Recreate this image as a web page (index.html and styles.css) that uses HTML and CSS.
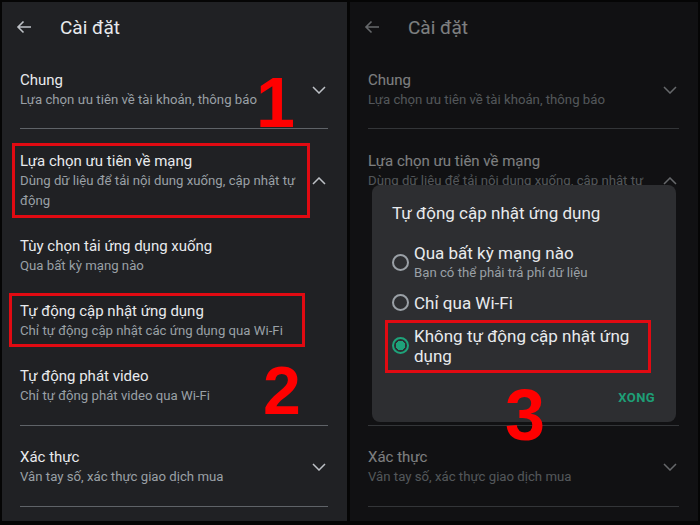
FILE: index.html
```html
<html>
  <head>
    <meta charset="UTF-8">
    <link rel="stylesheet" href="styles.css">
  </head>
  <body>
    <div class="shot">

      <section class="phone left">
        <header class="bar">
          <svg class="back" width="16" height="14" viewBox="0 0 16 14"><path d="M15 7H2M7.5 1.5L2 7l5.5 5.5" fill="none" stroke="#bdc1c6" stroke-width="1.6"/></svg>
          <h1>Cài đặt</h1>
        </header>

        <div class="group first">
          <div class="item">
            <div class="text"><p class="name">Chung</p><p class="desc">Lựa chọn ưu tiên về tài khoản, thông báo</p></div>
            <svg class="chev" width="14" height="8" viewBox="0 0 14 8"><path d="M1 1l6 6 6-6" fill="none" stroke="#bdc1c6" stroke-width="1.5"/></svg>
          </div>
        </div>

        <div class="group second">
          <div class="item">
            <div class="text"><p class="name">Lựa chọn ưu tiên về mạng</p><p class="desc">Dùng dữ liệu để tải nội dung xuống, cập nhật tự động</p></div>
            <svg class="chev" width="14" height="8" viewBox="0 0 14 8"><path d="M1 7l6-6 6 6" fill="none" stroke="#bdc1c6" stroke-width="1.5"/></svg>
          </div>
          <div class="item">
            <div class="text"><p class="name">Tùy chọn tải ứng dụng xuống</p><p class="desc">Qua bất kỳ mạng nào</p></div>
          </div>
          <div class="item">
            <div class="text"><p class="name">Tự động cập nhật ứng dụng</p><p class="desc">Chỉ tự động cập nhật các ứng dụng qua Wi-Fi</p></div>
          </div>
          <div class="item">
            <div class="text"><p class="name">Tự động phát video</p><p class="desc">Chỉ tự động phát video qua Wi-Fi</p></div>
          </div>
        </div>

        <div class="group third">
          <div class="item">
            <div class="text"><p class="name">Xác thực</p><p class="desc">Vân tay số, xác thực giao dịch mua</p></div>
            <svg class="chev" width="14" height="8" viewBox="0 0 14 8"><path d="M1 1l6 6 6-6" fill="none" stroke="#bdc1c6" stroke-width="1.5"/></svg>
          </div>
        </div>

        <div class="mark m1"></div>
        <div class="mark m2"></div>
        <span class="num n1">1</span>
        <span class="num n2">2</span>
      </section>

      <section class="phone right">
        <header class="bar">
          <svg class="back" width="16" height="14" viewBox="0 0 16 14"><path d="M15 7H2M7.5 1.5L2 7l5.5 5.5" fill="none" stroke="#bdc1c6" stroke-width="1.6"/></svg>
          <h1>Cài đặt</h1>
        </header>

        <div class="group first">
          <div class="item">
            <div class="text"><p class="name">Chung</p><p class="desc">Lựa chọn ưu tiên về tài khoản, thông báo</p></div>
            <svg class="chev" width="14" height="8" viewBox="0 0 14 8"><path d="M1 1l6 6 6-6" fill="none" stroke="#bdc1c6" stroke-width="1.5"/></svg>
          </div>
        </div>

        <div class="group second">
          <div class="item">
            <div class="text"><p class="name">Lựa chọn ưu tiên về mạng</p><p class="desc">Dùng dữ liệu để tải nội dung xuống, cập nhật tự <span class="covered">động</span></p></div>
            <svg class="chev" width="14" height="8" viewBox="0 0 14 8"><path d="M1 7l6-6 6 6" fill="none" stroke="#bdc1c6" stroke-width="1.5"/></svg>
          </div>
          <div class="item covered">
            <div class="text"><p class="name">Tùy chọn tải ứng dụng xuống</p><p class="desc">Qua bất kỳ mạng nào</p></div>
          </div>
          <div class="item covered">
            <div class="text"><p class="name">Tự động cập nhật ứng dụng</p><p class="desc">Chỉ tự động cập nhật các ứng dụng qua Wi-Fi</p></div>
          </div>
          <div class="item covered">
            <div class="text"><p class="name">Tự động phát video</p><p class="desc">Chỉ tự động phát video qua Wi-Fi</p></div>
          </div>
        </div>

        <div class="group third">
          <div class="item">
            <div class="text"><p class="name">Xác thực</p><p class="desc">Vân tay số, xác thực giao dịch mua</p></div>
            <svg class="chev" width="14" height="8" viewBox="0 0 14 8"><path d="M1 1l6 6 6-6" fill="none" stroke="#bdc1c6" stroke-width="1.5"/></svg>
          </div>
        </div>

        <div class="scrim"></div>

        <div class="dialog">
          <h2>Tự động cập nhật ứng dụng</h2>
          <div class="opt o1">
            <span class="radio"></span>
            <div class="text"><p class="name">Qua bất kỳ mạng nào</p><p class="desc">Bạn có thể phải trả phí dữ liệu</p></div>
          </div>
          <div class="opt o2">
            <span class="radio"></span>
            <div class="text"><p class="name">Chỉ qua Wi-Fi</p></div>
          </div>
          <div class="opt o3">
            <span class="radio on"></span>
            <div class="text"><p class="name">Không tự động cập nhật ứng dụng</p></div>
          </div>
          <div class="actions"><span class="done">XONG</span></div>
        </div>

        <div class="mark m3"></div>
        <span class="num n3">3</span>
      </section>

    </div>
  </body>
</html>
```

FILE: styles.css
```css
body {
  margin: 0;
  background: #000;
  font-family: Roboto, "Noto Sans", sans-serif;
}

p, h1, h2 {
  margin: 0;
  font-weight: normal;
}

.shot {
  display: flex;
  gap: 3px;
  width: 700px;
  height: 525px;
  box-sizing: border-box;
  padding: 2px 2px 4px 2px;
  background: #050505;
}

.phone {
  position: relative;
  box-sizing: border-box;
  background: #202124;
  padding: 0 19px 0 18px;
  overflow: hidden;
}

.left {
  width: 345px;
}

.right {
  width: 348px;
}

.bar {
  display: flex;
  align-items: center;
  height: 50px;
}

.back {
  margin-left: -4px;
}

.bar h1 {
  margin-left: 28px;
  font-size: 19px;
  color: #e8eaed;
}

.group {
  display: flex;
  flex-direction: column;
  gap: 25px;
  border-bottom: 1px solid #5f6368;
}

.first {
  padding: 18px 0;
}

.second {
  padding: 22px 0 19px;
}

.third {
  padding: 21px 0 19px;
}

.item {
  display: flex;
  align-items: center;
}

.item .text {
  flex: 1;
  padding-right: 4px;
}

.covered {
  visibility: hidden;
}

.name {
  font-size: 15px;
  line-height: 20px;
  color: #e8eaed;
}

.desc {
  font-size: 13.2px;
  line-height: 20px;
  color: #9aa0a6;
}

.chev {
  margin-right: 2px;
}

.scrim {
  position: absolute;
  inset: 0;
  background: rgba(0, 0, 0, 0.46);
}

.dialog {
  position: absolute;
  left: 22px;
  top: 183px;
  width: 304px;
  height: 237px;
  box-sizing: border-box;
  padding: 18px 20px 0 20px;
  background: #2d2e31;
  border-radius: 8px;
}

.dialog h2 {
  font-size: 17px;
  line-height: 20px;
  color: #e8eaed;
  margin-bottom: 20px;
}

.opt {
  display: flex;
  align-items: center;
  gap: 5px;
}

.opt .name {
  font-size: 17px;
}

.o2 {
  margin-top: 10px;
}

.o3 {
  margin-top: 13px;
}

.radio {
  flex: none;
  width: 17px;
  height: 17px;
  box-sizing: border-box;
  border: 2px solid #9aa0a6;
  border-radius: 50%;
  margin-top: -2px;
}

.radio.on {
  border-color: #1ea37a;
  background: radial-gradient(circle, #1ea37a 0 4.5px, transparent 5px);
}

.actions {
  display: flex;
  justify-content: flex-end;
  margin-top: 24px;
  padding-right: 1px;
}

.done {
  font-size: 13px;
  font-weight: bold;
  letter-spacing: 0.4px;
  color: #1e9e76;
}

.mark {
  position: absolute;
  border: 3px solid #e10a12;
}

.m1 {
  left: 10px;
  top: 141px;
  width: 292px;
  height: 69px;
}

.m2 {
  left: 7px;
  top: 291px;
  width: 290px;
  height: 48px;
}

.m3 {
  left: 35px;
  top: 318px;
  width: 260px;
  height: 47px;
}

.num {
  position: absolute;
  font-family: "Liberation Sans", Arial, sans-serif;
  font-weight: bold;
  line-height: 1;
  color: #ff0000;
}

.n1 {
  left: 254px;
  top: 66px;
  font-size: 70px;
}

.n2 {
  left: 261px;
  top: 354px;
  font-size: 68px;
}

.n3 {
  left: 155px;
  top: 377px;
  font-size: 72px;
}
```
